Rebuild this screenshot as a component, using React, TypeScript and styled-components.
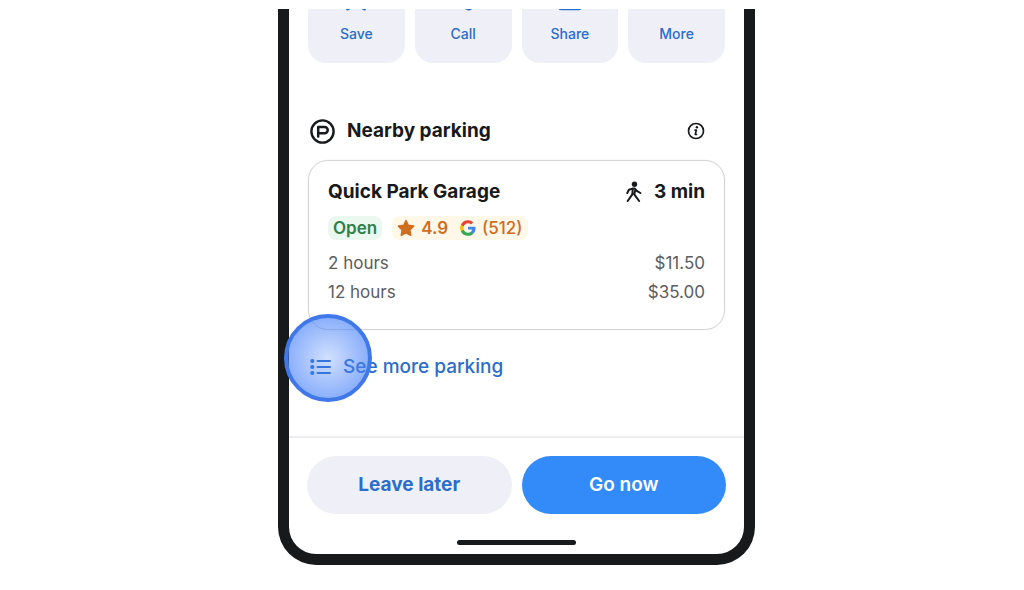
import React from "react";
import styled, { createGlobalStyle } from "styled-components";

const color = {
  ink: "#18191b",
  blue: "#2a6dca",
  brand: "#338bf9",
  tile: "#eff0f7",
  line: "#d4d4d6",
  muted: "#5b5d61",
  amber: "#cf6d20",
};

const GlobalStyle = createGlobalStyle`
  *, *::before, *::after { box-sizing: border-box; }
  body { margin: 0; background: #fff; }
  button { font: inherit; border: 0; cursor: pointer; }
  h2, h3, p { margin: 0; }
`;

const Page = styled.main`
  display: flex;
  justify-content: center;
  padding: 9px 0 24px 9px;
  font-family: Inter, "Liberation Sans", sans-serif;
  color: ${color.ink};
`;

const Phone = styled.div`
  width: 100%;
  max-width: 477px;
  border: 11px solid ${color.ink};
  border-top: 0;
  border-radius: 0 0 38px 38px;
  background: #fff;
`;

const Content = styled.div`
  padding: 0 19px 54px;
`;

const Actions = styled.nav`
  display: grid;
  grid-template-columns: repeat(4, 1fr);
  gap: 10px;
`;

const ActionTile = styled.button`
  display: flex;
  flex-direction: column;
  align-items: center;
  justify-content: flex-end;
  gap: 11px;
  height: 54px;
  padding: 0 0 19px;
  overflow: hidden;
  border-radius: 0 0 18px 18px;
  background: ${color.tile};
  color: ${color.blue};
  && {
    font-size: 14px;
    font-weight: 500;
    line-height: 20px;
  }
  svg { flex: none; }
`;

const SectionHeader = styled.header`
  display: flex;
  align-items: center;
  gap: 12px;
  margin-top: 54px;
  padding: 0 20px 0 2px;
`;

const SectionTitle = styled.h2`
  flex: 1;
  font-size: 19px;
  font-weight: 700;
  line-height: 28px;
`;

const IconButton = styled.button`
  display: flex;
  padding: 0;
  background: none;
  color: ${color.ink};
`;

const Card = styled.article`
  margin-top: 15px;
  padding: 17px 19px 23px;
  border: 1px solid ${color.line};
  border-radius: 20px;
  box-shadow: 0 0 1px ${color.line};
`;

const CardHead = styled.div`
  display: flex;
  justify-content: space-between;
  align-items: center;
`;

const CardTitle = styled.h3`
  font-size: 19px;
  font-weight: 700;
  line-height: 28px;
`;

const Walk = styled.p`
  display: flex;
  align-items: center;
  gap: 12px;
  font-size: 19px;
  font-weight: 700;
  line-height: 28px;
`;

const Badges = styled.div`
  display: flex;
  gap: 10px;
  margin: 10px 0 8px;
`;

const Badge = styled.span<{ $tone: "open" | "rating" }>`
  display: flex;
  align-items: center;
  gap: 6px;
  padding: 0 5px;
  border-radius: 8px;
  font-size: 17px;
  font-weight: ${(p) => (p.$tone === "open" ? 600 : 500)};
  line-height: 24px;
  color: ${(p) => (p.$tone === "open" ? "#2c8048" : color.amber)};
  background: ${(p) => (p.$tone === "open" ? "#ebf8ef" : "#fff8e8")};
`;

const Score = styled.span`
  margin-right: 6px;
  font-weight: 600;
`;

const Rates = styled.table`
  width: 100%;
  border-collapse: collapse;
  font-size: 17px;
  color: ${color.muted};
  th, td { padding: 1px 0 0; font-weight: 400; text-align: left; line-height: 28px; }
  td { text-align: right; }
`;

const MoreRow = styled.div`
  position: relative;
  display: flex;
  margin-top: 22px;
`;

const MoreLink = styled.a`
  display: flex;
  align-items: center;
  gap: 12px;
  padding-left: 2px;
  font-size: 19px;
  font-weight: 500;
  line-height: 30px;
  color: ${color.blue};
  text-decoration: none;
`;

const TouchPoint = styled.span`
  position: absolute;
  left: -24px;
  top: -38px;
  width: 88px;
  height: 88px;
  border: 4px solid #4078e9;
  border-radius: 50%;
  background: radial-gradient(circle, rgba(78, 137, 250, 0.26), rgba(70, 128, 248, 0.62) 70%);
  pointer-events: none;
`;

const Footer = styled.footer`
  display: flex;
  flex-direction: column;
  align-items: center;
  gap: 26px;
  padding: 18px 18px 9px;
  border-top: 2px solid #ececee;
`;

const FooterActions = styled.div`
  display: grid;
  grid-template-columns: 1fr 1fr;
  gap: 10px;
  width: 100%;
`;

const PillButton = styled.button<{ $primary?: boolean }>`
  padding: 14px;
  border-radius: 30px;
  background: ${(p) => (p.$primary ? color.brand : color.tile)};
  color: ${(p) => (p.$primary ? "#fff" : color.blue)};
  && {
    font-size: 19px;
    font-weight: ${(p) => (p.$primary ? 600 : 700)};
    line-height: 30px;
  }
`;

const HomeBar = styled.div`
  width: 119px;
  height: 5px;
  border-radius: 3px;
  background: ${color.ink};
`;

const stroke = {
  fill: "none",
  stroke: "currentColor",
  strokeLinecap: "round" as const,
  strokeLinejoin: "round" as const,
};

const StarOutline = () => (
  <svg width="26" height="26" viewBox="0 0 26 26" {...stroke} strokeWidth="3" aria-hidden="true">
    <path d="M13 1l3 6.500 7.500 1-5.500 5 3.500 8.500L13 17l-8.500 5L8 13.500l-5.500-5 7.500-1z" />
  </svg>
);

const PhoneIcon = () => (
  <svg width="26" height="26" viewBox="0 0 26 26" {...stroke} strokeWidth="3" aria-hidden="true">
    <path d="M3 2l5-1 3 5-3 3c2 4 4 6 8 8l2-2 4 3-1 3q-1 1.300-3 .8C11 19 3 12 3 2z" />
  </svg>
);

const ShareIcon = () => (
  <svg width="26" height="26" viewBox="0 0 26 26" {...stroke} strokeWidth="3" aria-hidden="true">
    <path d="M6 8H2.500v12q0 1.800 2 1.800h17q2 0 2-1.800V8H20M13 14V2M8 6l5-4 5 4" />
  </svg>
);

const DotsIcon = () => (
  <svg width="26" height="26" viewBox="0 0 26 26" fill="currentColor" aria-hidden="true">
    <circle cx="4" cy="12" r="2" />
    <circle cx="13" cy="12" r="2" />
    <circle cx="22" cy="12" r="2" />
  </svg>
);

const ParkingIcon = () => (
  <svg width="25" height="25" viewBox="0 0 25 25" {...stroke} strokeWidth="2.400" aria-hidden="true">
    <circle cx="12.500" cy="12.500" r="11.100" />
    <path d="M8.200 17.600V7.900h6.400a3.100 3.100 0 0 1 0 6.300H8.400" strokeWidth="2.500" />
  </svg>
);

const InfoIcon = () => (
  <svg width="18" height="18" viewBox="0 0 18 18" {...stroke} strokeWidth="1.700" aria-hidden="true">
    <circle cx="9" cy="9" r="7.500" />
    <path d="M8 8h1.300l-1 4.500h1.200" />
    <circle cx="9.900" cy="5.300" r="1.200" fill="currentColor" stroke="none" />
  </svg>
);

const WalkIcon = () => (
  <svg width="16" height="22" viewBox="0 0 16 22" {...stroke} strokeWidth="2" aria-hidden="true">
    <circle cx="8.500" cy="3.200" r="2.700" fill="currentColor" stroke="none" />
    <path d="M1.300 12l1.600-3.200L6.500 7.600h2.300l2.400 2.600 3.200 1.800M6.800 8l-.5 5.400L1.700 20M9.300 9l-1 4.400 4.800 6.600" />
  </svg>
);

const StarIcon = () => (
  <svg width="18" height="18" viewBox="0 0 18 18" fill="currentColor" aria-hidden="true">
    <path
      d="M9 1.600l2.200 4.700 5.300.8-3.700 3.800.9 5.300L9 13.900l-4.700 2.300.9-5.300L1.500 7.100l5.300-.8z"
      stroke="currentColor"
      strokeWidth="1.600"
      strokeLinejoin="round"
    />
  </svg>
);

const GoogleIcon = () => (
  <svg width="16" height="16" viewBox="-1 -1 50 50" aria-hidden="true">
    <path fill="#4285f4" d="M47.500 24.500c0-1.600-.1-3.200-.4-4.700H24v9h13.200a11.300 11.300 0 0 1-4.900 7.400v6h7.900c4.600-4.300 7.300-10.500 7.300-17.700z" />
    <path fill="#34a853" d="M24 48.500c6.600 0 12.100-2.200 16.200-5.900l-7.900-6.100c-2.200 1.500-5 2.300-8.300 2.300-6.400 0-11.800-4.300-13.700-10.100H2.100V35A24.500 24.500 0 0 0 24 48.500z" />
    <path fill="#fbbc05" d="M10.300 28.700a14.700 14.700 0 0 1 0-9.400V13H2.100a24.500 24.500 0 0 0 0 22z" />
    <path fill="#ea4335" d="M24 9.200c3.600 0 6.800 1.200 9.400 3.700l7-7A23.500 23.500 0 0 0 24-.5 24.500 24.500 0 0 0 2.100 13l8.200 6.300C12.200 13.500 17.600 9.200 24 9.200z" />
  </svg>
);

const ListIcon = () => (
  <svg width="21" height="18" viewBox="0 0 21 18" {...stroke} strokeWidth="2" aria-hidden="true">
    <path d="M7.500 3H20M7.500 9H20M7.500 15H20" />
    <g fill="currentColor" stroke="none">
      <circle cx="2.300" cy="3" r="2.100" />
      <circle cx="2.300" cy="9" r="2.100" />
      <circle cx="2.300" cy="15" r="2.100" />
    </g>
  </svg>
);

const actions = [
  { label: "Save", Icon: StarOutline },
  { label: "Call", Icon: PhoneIcon },
  { label: "Share", Icon: ShareIcon },
  { label: "More", Icon: DotsIcon },
];

const rates = [
  { span: "2 hours", price: "$11.50" },
  { span: "12 hours", price: "$35.00" },
];

export default function App() {
  return (
    <Page>
      <GlobalStyle />
      <Phone>
        <Content>
          <Actions>
            {actions.map(({ label, Icon }) => (
              <ActionTile key={label} type="button">
                <Icon />
                {label}
              </ActionTile>
            ))}
          </Actions>
          <SectionHeader>
            <ParkingIcon />
            <SectionTitle>Nearby parking</SectionTitle>
            <IconButton type="button" aria-label="About nearby parking">
              <InfoIcon />
            </IconButton>
          </SectionHeader>
          <Card>
            <CardHead>
              <CardTitle>Quick Park Garage</CardTitle>
              <Walk>
                <WalkIcon />3 min
              </Walk>
            </CardHead>
            <Badges>
              <Badge $tone="open">Open</Badge>
              <Badge $tone="rating">
                <StarIcon />
                <Score>4.9</Score>
                <GoogleIcon />
                <span>(512)</span>
              </Badge>
            </Badges>
            <Rates>
              <tbody>
                {rates.map((rate) => (
                  <tr key={rate.span}>
                    <th scope="row">{rate.span}</th>
                    <td>{rate.price}</td>
                  </tr>
                ))}
              </tbody>
            </Rates>
          </Card>
          <MoreRow>
            <MoreLink href="#parking">
              <ListIcon />
              See more parking
            </MoreLink>
            <TouchPoint />
          </MoreRow>
        </Content>
        <Footer>
          <FooterActions>
            <PillButton type="button">Leave later</PillButton>
            <PillButton type="button" $primary>
              Go now
            </PillButton>
          </FooterActions>
          <HomeBar />
        </Footer>
      </Phone>
    </Page>
  );
}
